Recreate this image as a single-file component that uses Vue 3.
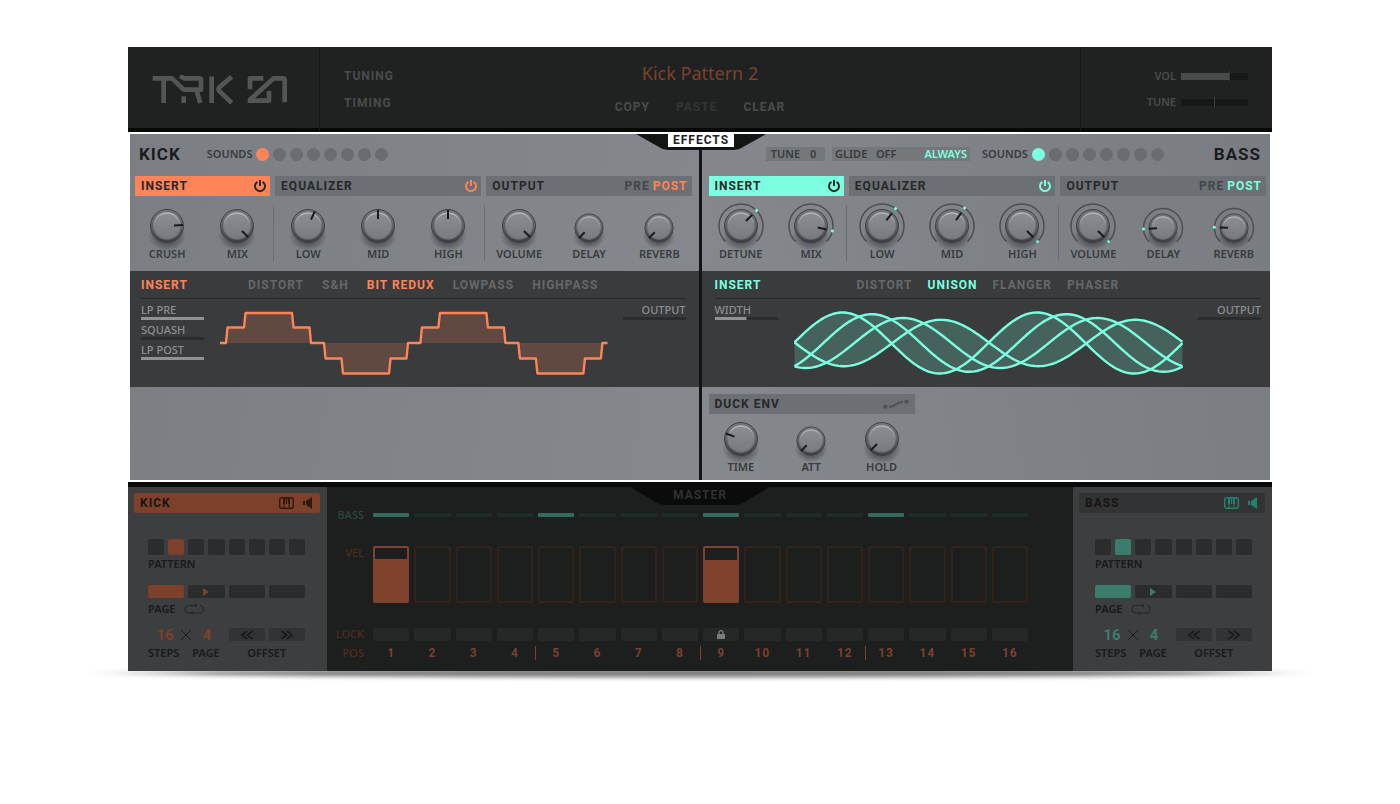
<template>
  <main class="page">
    <svg class="defs" width="0" height="0" aria-hidden="true">
      <defs>
        <linearGradient id="knobRim" x1="0" y1="0" x2="0" y2="1">
          <stop offset="0" stop-color="#74787c" />
          <stop offset="0.5" stop-color="#5e6165" />
          <stop offset="1" stop-color="#3c3e41" />
        </linearGradient>
        <linearGradient id="knobFace" x1="0" y1="0" x2="0" y2="1">
          <stop offset="0" stop-color="#8a8e92" />
          <stop offset="1" stop-color="#777b80" />
        </linearGradient>
        <linearGradient id="knobEdge" x1="0" y1="0" x2="0" y2="1">
          <stop offset="0" stop-color="#b4b8bb" />
          <stop offset="0.5" stop-color="#7e8286" />
          <stop offset="1" stop-color="#6c6f73" />
        </linearGradient>
        <radialGradient id="knobShadow">
          <stop offset="0.5" stop-color="#000" stop-opacity="0.34" />
          <stop offset="1" stop-color="#000" stop-opacity="0" />
        </radialGradient>
      </defs>
    </svg>

    <div class="plugin">
      <header class="top">
        <div class="brand">
          <svg class="logo" viewBox="96 104 408 87" width="136" height="29" role="img" aria-label="TRK 01">
            <g fill="none" stroke="#545555" stroke-width="14" stroke-linejoin="round">
              <path d="M98 114H156L191 148H243V119Q243 114 238 114H192L180 107" />
              <path d="M131 114V188" />
              <path d="M191 168V188" />
              <path d="M229 148L241 188" />
              <path d="M275 108V188" />
              <path d="M335 109L296 143V150L335 188" />
              <path d="M390 147V114H430" />
              <path d="M390 188V178L461 114H489Q494 114 494 120V186" />
              <path d="M386 181H447V152" />
            </g>
          </svg>
        </div>
        <nav class="modes">
          <button type="button">TUNING</button>
          <button type="button">TIMING</button>
        </nav>
        <div class="pattern">
          <h1>Kick Pattern 2</h1>
          <div class="edit">
            <button type="button">COPY</button>
            <button type="button" disabled>PASTE</button>
            <button type="button">CLEAR</button>
          </div>
        </div>
        <div class="main-levels">
          <label>VOL <input v-model="volume" type="range" class="level" :style="{ '--fill': volume + '%' }" /></label>
          <label>TUNE <input v-model="tune" type="range" class="level centered" /></label>
        </div>
      </header>

      <section class="effects">
        <div class="badge-effects"><span>EFFECTS</span></div>
        <article v-for="voice in voices" :key="voice.id" class="voice" :class="voice.id">
          <div class="voice-head">
            <h2>{{ voice.name }}</h2>
            <div v-if="voice.id === 'bass'" class="pitch">
              <label class="field tune">TUNE <input v-model="bassTune" type="text" /></label>
              <div class="field glide">
                <button type="button">GLIDE&nbsp;&nbsp; OFF</button>
                <button type="button" class="on">ALWAYS</button>
              </div>
            </div>
            <fieldset class="sounds">
              <legend>SOUNDS</legend>
              <input
                v-for="n in 8"
                :key="n"
                v-model="voice.sound"
                type="radio"
                :value="n"
                :name="voice.id + '-sound'"
                :aria-label="'Sound ' + n"
              />
            </fieldset>
          </div>

          <div class="tabs">
            <div class="tab lit">
              <span>INSERT</span>
              <button type="button" aria-label="Insert power">
                <svg viewBox="0 0 12 12" width="12" height="12"><path class="power" d="M3.4 1.9A5 5 0 1 0 8.6 1.9M6 0V6" /></svg>
              </button>
            </div>
            <div class="tab">
              <span>EQUALIZER</span>
              <button type="button" class="on" aria-label="Equalizer power">
                <svg viewBox="0 0 12 12" width="12" height="12"><path class="power" d="M3.4 1.9A5 5 0 1 0 8.6 1.9M6 0V6" /></svg>
              </button>
            </div>
            <div class="tab">
              <span>OUTPUT</span>
              <span class="prepost">
                <button type="button">PRE</button>
                <button type="button" class="on">POST</button>
              </span>
            </div>
          </div>

          <div class="knobs">
            <label v-for="knob in voice.knobs" :key="knob.label" class="knob" :class="{ split: knob.split }">
              <svg viewBox="0 0 48 48" width="48" height="48">
                <g :transform="knob.small ? 'translate(24 26)' : 'translate(24 24)'">
                  <path v-if="knob.ring" class="ring" :d="ringPath(knob)" />
                  <circle
                    v-if="knob.ring"
                    class="dot"
                    r="1.5"
                    :cy="-ringRadius(knob)"
                    :transform="'rotate(' + knob.angle + ')'"
                  />
                  <g :transform="knob.small ? 'scale(0.86)' : ''">
                    <ellipse cy="10" rx="19" ry="15" fill="url(#knobShadow)" />
                    <circle r="16.5" fill="url(#knobRim)" stroke="#3f4245" />
                    <circle r="13" fill="url(#knobFace)" stroke="url(#knobEdge)" stroke-width="1.5" />
                  </g>
                  <path class="hand" :d="knob.small ? 'M0 -6V-14' : 'M0 -7V-16'" :transform="'rotate(' + knob.angle + ')'" />
                </g>
              </svg>
              <span>{{ knob.label }}</span>
              <input v-model="knob.angle" type="range" min="-135" max="135" />
            </label>
          </div>

          <div class="insert">
            <div class="insert-head">
              <h3>INSERT</h3>
              <div class="types">
                <button
                  v-for="type in voice.types"
                  :key="type"
                  type="button"
                  :class="{ on: type === voice.type }"
                  @click="voice.type = type"
                >{{ type }}</button>
              </div>
            </div>
            <div class="insert-body">
              <div class="params">
                <label v-for="param in voice.params" :key="param.label">
                  {{ param.label }}
                  <input v-model="param.value" type="range" class="bar" :style="{ '--fill': param.value + '%' }" />
                </label>
              </div>
              <svg class="wave" viewBox="0 0 390 67" width="390" height="67">
                <template v-if="voice.id === 'kick'">
                  <path class="area" :d="stepWave + 'Z'" />
                  <path class="curve" :d="stepWave" />
                </template>
                <template v-else>
                  <path class="area" :d="envelope" />
                  <path v-for="(line, i) in sineWaves" :key="i" class="curve" :d="line" />
                </template>
              </svg>
              <div class="params out">
                <label>
                  OUTPUT
                  <input type="range" class="bar" value="0" :style="{ '--fill': '0%' }" />
                </label>
              </div>
            </div>
          </div>

          <div class="lower">
            <template v-if="voice.duck">
              <div class="tabs">
                <div class="tab duck">
                  <span>DUCK ENV</span>
                  <svg viewBox="0 0 26 10" width="26" height="10">
                    <circle cx="2.2" cy="7.6" r="2.2" />
                    <circle cx="23.6" cy="2.6" r="2.2" />
                    <path d="M6 8C12 8 13 3 20 3" />
                  </svg>
                </div>
              </div>
              <div class="knobs">
                <label v-for="knob in voice.duck" :key="knob.label" class="knob">
                  <svg viewBox="0 0 48 48" width="48" height="48">
                    <g :transform="knob.small ? 'translate(24 26)' : 'translate(24 24)'">
                      <g :transform="knob.small ? 'scale(0.86)' : ''">
                        <ellipse cy="10" rx="19" ry="15" fill="url(#knobShadow)" />
                        <circle r="16.5" fill="url(#knobRim)" stroke="#3f4245" />
                        <circle r="13" fill="url(#knobFace)" stroke="url(#knobEdge)" stroke-width="1.5" />
                      </g>
                      <path class="hand" :d="knob.small ? 'M0 -6V-14' : 'M0 -7V-16'" :transform="'rotate(' + knob.angle + ')'" />
                    </g>
                  </svg>
                  <span>{{ knob.label }}</span>
                  <input v-model="knob.angle" type="range" min="-135" max="135" />
                </label>
              </div>
            </template>
          </div>
        </article>
      </section>

      <section class="bottom">
        <aside v-for="voice in voices" :key="voice.id" class="side" :class="voice.id">
          <div class="side-title">
            <h2>{{ voice.name }}</h2>
            <button type="button" aria-label="Keyboard">
              <svg viewBox="0 0 15 12" width="15" height="12">
                <rect class="line" x="0.7" y="0.7" width="13.6" height="10.6" rx="2" />
                <path class="line thin" d="M5 6V11M10 6V11" />
                <path d="M4 1H6V7H4ZM6.8 1H8.2V7H6.8ZM9 1H11V7H9Z" />
              </svg>
            </button>
            <button type="button" aria-label="Mute">
              <svg viewBox="0 0 10 12" width="10" height="12"><path d="M0 4H2V8H0ZM3 4L9 0V12L3 8Z" /></svg>
            </button>
          </div>
          <div class="side-body">
            <div class="cells patterns">
              <button v-for="n in 8" :key="n" type="button" :class="{ on: n === 2 }" :aria-label="'Pattern ' + n"></button>
            </div>
            <p class="caption">PATTERN</p>
            <div class="cells pages">
              <button v-for="n in 4" :key="n" type="button" :class="{ on: n === 1 }" :aria-label="'Page ' + n">
                <svg v-if="n === 2" viewBox="0 0 6 8" width="6" height="8"><path d="M0 0L6 4L0 8Z" /></svg>
              </button>
            </div>
            <p class="caption page-caption">
              PAGE
              <svg viewBox="0 0 20 10" width="20" height="10">
                <path d="M9 9H4.5A3.5 3.7 0 0 1 4.5 1.5H13M11 0L13 1.5L11 3M16 1.5A3.5 3.7 0 0 1 15.5 9H7M9 7.5L7 9L9 10.5" />
              </svg>
            </p>
            <div class="cells offset">
              <div class="counts">
                <input v-model="steps" type="text" :aria-label="voice.name + ' steps'" />
                <svg viewBox="0 0 12 12" width="12" height="12"><path d="M1 1L11 11M11 1L1 11" /></svg>
                <input v-model="pages" type="text" :aria-label="voice.name + ' pages'" />
              </div>
              <button type="button" aria-label="Offset back">
                <svg viewBox="0 0 12 10" width="12" height="10"><path d="M6 1L1 5L6 9M11.5 1L6.5 5L11.5 9" /></svg>
              </button>
              <button type="button" aria-label="Offset forward">
                <svg viewBox="0 0 12 10" width="12" height="10"><path d="M0.5 1L5.5 5L0.5 9M6 1L11 5L6 9" /></svg>
              </button>
            </div>
            <div class="cells captions">
              <span>STEPS</span><span class="mid">PAGE</span><span class="wide">OFFSET</span>
            </div>
          </div>
        </aside>

        <div class="seq">
          <div class="badge-master">MASTER</div>
          <div class="row other">
            <span class="name">BASS</span>
            <i v-for="n in 16" :key="n" :class="{ on: n % 4 === 1 }"></i>
          </div>
          <div class="row velocity">
            <span class="name">VEL</span>
            <label v-for="(v, i) in velocities" :key="i" :class="{ on: v > 0 }">
              <b :style="{ height: v + '%' }"></b>
              <input v-model="velocities[i]" type="range" :aria-label="'Velocity ' + (i + 1)" />
            </label>
          </div>
          <div class="row locks">
            <span class="name">LOCK</span>
            <button v-for="n in 16" :key="n" type="button" :aria-label="'Lock ' + n">
              <svg v-if="n === 9" viewBox="0 0 8 9" width="8" height="9">
                <path d="M0 4H8V9H0Z" />
                <path class="shackle" d="M2 4V2.6A2 2 0 0 1 6 2.6V4" />
              </svg>
            </button>
          </div>
          <div class="row positions">
            <span class="name">POS</span>
            <span v-for="n in 16" :key="n" class="pos" :class="{ beat: n > 1 && n % 4 === 1 }">{{ n }}</span>
          </div>
        </div>
      </section>
    </div>
  </main>
</template>

<script setup>
import { ref, reactive } from 'vue'

const volume = ref(73)
const tune = ref(50)
const bassTune = ref('0')
const steps = ref('16')
const pages = ref('4')
const velocities = ref([79, 0, 0, 0, 0, 0, 0, 0, 77, 0, 0, 0, 0, 0, 0, 0])

const voices = reactive([
  {
    id: 'kick',
    name: 'KICK',
    sound: 1,
    type: 'BIT REDUX',
    types: ['DISTORT', 'S&H', 'BIT REDUX', 'LOWPASS', 'HIGHPASS'],
    params: [
      { label: 'LP PRE', value: 100 },
      { label: 'SQUASH', value: 0 },
      { label: 'LP POST', value: 100 },
    ],
    knobs: [
      { label: 'CRUSH', angle: 86 },
      { label: 'MIX', angle: 135 },
      { label: 'LOW', angle: 25, split: true },
      { label: 'MID', angle: 0 },
      { label: 'HIGH', angle: 0 },
      { label: 'VOLUME', angle: 135, split: true },
      { label: 'DELAY', angle: -135, small: true },
      { label: 'REVERB', angle: -135, small: true },
    ],
  },
  {
    id: 'bass',
    name: 'BASS',
    sound: 1,
    type: 'UNISON',
    types: ['DISTORT', 'UNISON', 'FLANGER', 'PHASER'],
    params: [{ label: 'WIDTH', value: 50 }],
    knobs: [
      { label: 'DETUNE', angle: 45, ring: true },
      { label: 'MIX', angle: 103, ring: true },
      { label: 'LOW', angle: 38, ring: true, split: true },
      { label: 'MID', angle: 35, ring: true },
      { label: 'HIGH', angle: 135, ring: true },
      { label: 'VOLUME', angle: 135, ring: true, split: true },
      { label: 'DELAY', angle: -93, ring: true, small: true },
      { label: 'REVERB', angle: -88, ring: true, small: true },
    ],
    duck: [
      { label: 'TIME', angle: -70 },
      { label: 'ATT', angle: -135, small: true },
      { label: 'HOLD', angle: -135 },
    ],
  },
])

function ringRadius(knob) {
  return knob.small ? 19.5 : 22
}

function ringPath(knob) {
  const r = ringRadius(knob)
  const e = r * Math.SQRT1_2
  return `M${-e} ${e}A${r} ${r} 0 1 1 ${e} ${e}`
}

// one period of the bit-crushed sine, drawn twice
const crushed = [
  [8, 33], [9.5, 17.5], [26, 17.5], [27.5, 3], [74, 3], [75.5, 17.5],
  [91.5, 17.5], [93, 33], [106, 33], [107.5, 48.5], [123.5, 48.5], [125, 63.5],
  [171, 63.5], [172.5, 48.5], [188.5, 48.5], [190, 33],
]
const period = 194.4
const stepWave =
  'M2 33' +
  [0, period].map((dx) => crushed.map(([x, y]) => `L${x + dx} ${y}`).join('')).join('') +
  'L389.5 33'

const sines = [
  { peak: 49.5, amp: 30.5 },
  { peak: 79, amp: 28.8 },
  { peak: 110, amp: 25 },
  { peak: 148, amp: 23.2 },
]
const xs = Array.from({ length: 195 }, (_, i) => 1.5 + i * 2)

function sineY(s, x) {
  return 33 - s.amp * Math.cos((2 * Math.PI * (x - s.peak)) / period)
}

function toPath(points) {
  return 'M' + points.map(([x, y]) => `${x.toFixed(1)} ${y.toFixed(2)}`).join('L')
}

const sineWaves = sines.map((s) => toPath(xs.map((x) => [x, sineY(s, x)])))
const upper = xs.map((x) => [x, Math.min(...sines.map((s) => sineY(s, x)))])
const lowerEdge = xs.map((x) => [x, Math.max(...sines.map((s) => sineY(s, x)))])
const envelope = toPath([...upper, ...lowerEdge.reverse()]) + 'Z'
</script>

<style>
body {
  margin: 0;
  background: #fff;
}
</style>

<style scoped>
.page {
  padding: 47px 128px;
  font-family: 'Noto Sans', 'Open Sans', sans-serif;
  font-size: 11px;
  line-height: 14px;
}

.defs {
  position: absolute;
}

h1, h2, h3, p, fieldset {
  margin: 0;
  padding: 0;
  border: 0;
}

button {
  padding: 0;
  border: 0;
  background: none;
  color: inherit;
  font: inherit;
  letter-spacing: inherit;
  cursor: pointer;
}

input {
  margin: 0;
}

svg {
  display: block;
}

.plugin {
  position: relative;
  min-width: 1100px;
}

.plugin::after {
  content: '';
  position: absolute;
  z-index: -1;
  left: -44px;
  right: -44px;
  bottom: -7px;
  height: 10px;
  background: radial-gradient(closest-side, #000 80%, transparent);
  filter: blur(2px);
  opacity: 0.5;
}

/* header */
.top {
  display: grid;
  grid-template-columns: 192px 1fr auto 1fr 192px;
  height: 81px;
  border-bottom: 4px solid #080808;
  background: #202222;
  color: #4a4b4b;
  font-family: Roboto, 'Open Sans', sans-serif;
  font-size: 12px;
  font-weight: 700;
  letter-spacing: 1px;
}

.brand {
  padding: 28px 0 0 24px;
  border-right: 1px solid #151616;
}

.modes {
  display: flex;
  flex-direction: column;
  align-items: flex-start;
  gap: 13px;
  padding: 22px 24px;
}

.pattern {
  display: flex;
  flex-direction: column;
  align-items: center;
  gap: 15px;
  padding-top: 14px;
}

.pattern h1 {
  color: #7b412d;
  font-family: 'Noto Sans', 'Open Sans', sans-serif;
  font-size: 18px;
  font-weight: 400;
  line-height: 24px;
  letter-spacing: normal;
}

.edit {
  display: flex;
  gap: 26px;
}

.edit button:disabled {
  color: #333434;
}

.main-levels {
  grid-column: 5;
  display: flex;
  flex-direction: column;
  align-items: flex-end;
  gap: 12px;
  padding: 22px 24px 0 0;
  border-left: 1px solid #151616;
  font-family: 'Noto Sans', 'Open Sans', sans-serif;
  font-size: 11px;
  font-weight: 600;
  letter-spacing: normal;
}

.main-levels label {
  display: flex;
  align-items: center;
  gap: 5px;
}

input[type='range'] {
  appearance: none;
}

.level,
.bar {
  display: block;
  width: 67px;
  height: 7px;
  background: linear-gradient(#494a4a, #494a4a) left / var(--fill) 100% no-repeat #161717;
}

.level::-webkit-slider-thumb {
  appearance: none;
  width: 1px;
  height: 10px;
  background: #3c3d3d;
}

.level.centered {
  background: #161717;
}

/* effects */
.effects {
  position: relative;
  display: grid;
  grid-template-columns: 1fr 1fr;
  gap: 3px;
  border: 2px solid #fff;
  background: #131414;
}

.badge-effects {
  position: absolute;
  z-index: 1;
  top: -2px;
  left: 50%;
  display: flex;
  justify-content: center;
  width: 130px;
  height: 18px;
  margin-left: -64px;
  background: #131414;
  clip-path: polygon(0 0, 100% 0, 100% 2px, 82% 85%, 79% 96%, 75% 100%, 25% 100%, 21% 96%, 18% 85%, 0 2px);
  font-family: Roboto, 'Open Sans', sans-serif;
  font-size: 12px;
  font-weight: 700;
  letter-spacing: 1px;
}

.badge-effects::before {
  content: '';
  position: absolute;
  top: 0;
  left: 0;
  right: 0;
  height: 2px;
  background: #fff;
}

.badge-effects span {
  position: relative;
  height: 15px;
  padding: 0 5px;
  background: #fff;
  color: #222;
  line-height: 16px;
}

.voice {
  --accent: #ff8457;
  --dim: #7d402b;
  color: #383b3e;
  background: linear-gradient(100deg, #7b7f83, #85898d);
  font-weight: 600;
}

.voice.bass {
  --accent: #7bffe0;
  background: linear-gradient(260deg, #797c80, #85898d);
}

.voice-head {
  display: flex;
  align-items: center;
  gap: 26px;
  height: 42px;
  padding: 0 9px 2px;
  box-sizing: border-box;
}

.voice-head h2 {
  color: #1b1c1d;
  font-family: Roboto, 'Open Sans', sans-serif;
  font-size: 17px;
  font-weight: 700;
  letter-spacing: 1px;
}

.bass .voice-head {
  gap: 12px;
  justify-content: flex-end;
}

.bass .voice-head h2 {
  order: 3;
  margin-left: 38px;
}

.sounds {
  display: flex;
  align-items: center;
  gap: 4px;
}

.sounds legend {
  float: left;
  padding: 0;
}

.sounds input {
  appearance: none;
  width: 13px;
  height: 13px;
  border-radius: 50%;
  background: #696c70;
}

.sounds input:checked {
  background: var(--accent);
}

.pitch {
  display: flex;
  gap: 7px;
}

.field {
  display: flex;
  gap: 10px;
  padding: 0 5px;
  background: #75787b;
}

.field input {
  width: 10px;
  padding: 0;
  border: 0;
  background: none;
  color: inherit;
  font: inherit;
}

.glide {
  gap: 28px;
  padding: 0 3px;
}

.on {
  color: var(--accent);
}

.tabs {
  display: grid;
  grid-template-columns: 135fr 206fr 205fr;
  gap: 5px;
  padding: 0 7px 0 5px;
}

.bass .tabs {
  padding: 0 4px 0 7px;
}

.tab {
  display: flex;
  align-items: center;
  justify-content: space-between;
  height: 20px;
  padding: 0 4px 0 6px;
  border-radius: 1px;
  background: #6c6f73;
  color: #26282a;
  font-family: Roboto, 'Open Sans', sans-serif;
  font-size: 12px;
  font-weight: 700;
  letter-spacing: 1px;
}

.tab.lit {
  background: var(--accent);
}

.power {
  fill: none;
  stroke: currentColor;
  stroke-width: 2;
}

.tab svg {
  overflow: visible;
}

.prepost {
  display: flex;
  gap: 3px;
  color: #434649;
}

.prepost .on {
  color: var(--accent);
}

.knobs {
  display: grid;
  grid-template-columns: repeat(8, 1fr);
  padding: 9px 4px 10px 2px;
}

.bass .knobs {
  padding: 9px 1px 10px 4px;
}

.knob {
  position: relative;
  display: flex;
  flex-direction: column;
  align-items: center;
}

.knob.split {
  border-left: 1px solid #6a6d71;
}

.knob svg {
  margin: -3px 0;
  overflow: visible;
}

.knob span {
  margin-bottom: 0;
}

.knob input {
  position: absolute;
  inset: 4px 18px 18px;
  width: 34px;
  opacity: 0;
  cursor: pointer;
}

.ring {
  fill: none;
  stroke: #4c4f52;
  stroke-width: 1.5;
}

.dot {
  fill: var(--accent);
}

.hand {
  stroke: #191a1b;
  stroke-width: 2;
}

/* insert display */
.insert {
  box-sizing: border-box;
  height: 116px;
  padding: 0 13px 0 11px;
  background: #393b3d;
  color: #8d8f91;
}

.bass .insert {
  padding: 0 9px 0 13px;
}

.insert-head {
  display: flex;
  align-items: center;
  height: 27px;
  border-bottom: 1px solid #28292a;
  font-family: Roboto, 'Open Sans', sans-serif;
  font-size: 12px;
  font-weight: 700;
  letter-spacing: 1px;
}

.insert-head h3 {
  flex: 0 0 107px;
  color: var(--accent);
  font: inherit;
}

.bass .insert-head h3 {
  flex-basis: 142px;
}

.types {
  display: flex;
  gap: 18px;
  color: #66686a;
}

.bass .types {
  gap: 15px;
}

.types .on {
  color: var(--accent);
}

.insert-body {
  display: grid;
  grid-template-columns: 63px 1fr 63px;
  justify-items: center;
  padding-top: 4px;
  font-weight: 500;
}

.params {
  display: flex;
  flex-direction: column;
  gap: 3px;
  width: 100%;
}

.params label {
  display: block;
}

.params.out {
  text-align: right;
}

.bar {
  width: 100%;
  height: 3px;
  background-color: #2b2c2d;
  background-image: linear-gradient(#8f9192, #8f9192);
}

.bar::-webkit-slider-thumb {
  appearance: none;
  width: 0;
  height: 3px;
}

.wave {
  margin-top: 7px;
}

.area {
  fill: var(--accent);
  fill-opacity: 0.2;
}

.curve {
  fill: none;
  stroke: var(--accent);
  stroke-width: 2.4;
  stroke-linejoin: round;
}

.lower {
  box-sizing: border-box;
  height: 93px;
  padding-top: 7px;
}

.lower .tabs {
  grid-template-columns: 206fr 346fr;
}

.bass .lower .knobs {
  padding-top: 4px;
}

.duck svg {
  fill: #4f5255;
  margin-right: 2px;
}

.duck path {
  fill: none;
  stroke: #4f5255;
  stroke-width: 2;
}

/* sequencer */
.bottom {
  display: grid;
  grid-template-columns: 199px 1fr 199px;
  border-top: 5px solid #0a0a0a;
  background: #1d1e1e;
}

.side {
  --dim: #7d402b;
  --icon: #30190f;
  padding: 6px 7px 11px 6px;
  background: #3c3e40;
  color: #191a1b;
  font-weight: 600;
}

.side.bass {
  --dim: #3c7c6d;
  --icon: #23826f;
  grid-column: 3;
}

.side-title {
  display: flex;
  align-items: center;
  gap: 9px;
  height: 20px;
  padding: 0 7px 0 6px;
  border-radius: 2px;
  background: #313335;
  color: var(--icon);
}

.kick .side-title {
  background: var(--dim);
}

.side-title h2 {
  flex: 1;
  color: #191312;
  font-family: Roboto, 'Open Sans', sans-serif;
  font-size: 12px;
  font-weight: 700;
  letter-spacing: 1px;
}

.side-title svg {
  fill: currentColor;
}

.side-title .line {
  fill: none;
  stroke: currentColor;
  stroke-width: 1.4;
}

.side-title .thin {
  stroke-width: 1;
}

.side-body {
  padding: 26px 15px 0 14px;
}

.bass .side-body {
  padding: 26px 13px 0 16px;
}

.cells {
  display: grid;
  grid-template-columns: repeat(4, 1fr);
  gap: 4px;
}

.cells button {
  display: flex;
  align-items: center;
  justify-content: center;
  height: 13px;
  border-radius: 2px;
  background: #2b2c2e;
}

.cells .on {
  background: var(--dim);
}

.cells.patterns {
  grid-template-columns: repeat(8, 1fr);
}

.cells.patterns button {
  height: 16px;
}

.pages svg {
  fill: var(--dim);
}

.caption {
  padding: 2px 0 14px;
}

.page-caption {
  display: flex;
  align-items: center;
  gap: 8px;
  padding: 4px 0 12px;
}

.page-caption svg {
  fill: none;
  stroke: #232426;
  overflow: visible;
}

.counts {
  grid-column: span 2;
  display: flex;
  align-items: center;
  gap: 5px;
  height: 13px;
  padding-left: 7px;
}

.counts input {
  width: 20px;
  padding: 0;
  border: 0;
  background: none;
  color: var(--dim);
  font: 700 15px/16px Roboto, 'Open Sans', sans-serif;
  text-align: center;
}

.counts svg {
  fill: none;
  stroke: #1b1c1d;
}

.cells.offset button {
  background: #313335;
}

.offset button svg {
  fill: none;
  stroke: #161718;
  stroke-width: 1.6;
}

.captions {
  padding-top: 5px;
}

.captions .mid {
  padding-left: 4px;
}

.captions .wide {
  grid-column: span 2;
  text-align: center;
}

.seq {
  position: relative;
  grid-column: 2;
  grid-row: 1;
  padding: 20px 45px 0 0;
}

.badge-master {
  position: absolute;
  top: -1px;
  left: 50%;
  width: 146px;
  height: 19px;
  margin-left: -73px;
  background: #0b0b0b;
  clip-path: polygon(0 0, 100% 0, 97% 8%, 81% 82%, 78% 94%, 74% 100%, 26% 100%, 22% 94%, 19% 82%, 3% 8%);
  color: #303131;
  font-family: Roboto, 'Open Sans', sans-serif;
  font-size: 12px;
  font-weight: 700;
  letter-spacing: 1px;
  line-height: 18px;
  text-align: center;
}

.row {
  display: grid;
  grid-template-columns: 41px repeat(16, 1fr);
  gap: 5px;
  align-items: center;
  color: #7b412d;
}

.name {
  padding-right: 4px;
  color: #4f2c21;
  font-weight: 500;
  text-align: right;
}

.other {
  height: 16px;
}

.other .name {
  color: #27493f;
}

.other i {
  height: 4px;
  border-radius: 1px;
  background: #1e2b28;
}

.other .on {
  background: #356a5f;
}

.velocity {
  align-items: start;
  margin-top: 23px;
}

.velocity label {
  position: relative;
  display: flex;
  align-items: flex-end;
  box-sizing: border-box;
  height: 57px;
  border: 2px solid #33211c;
  border-radius: 2px;
}

.velocity label.on {
  border-color: #80422d;
}

.velocity b {
  flex: 1;
  background: #80422d;
}

.velocity input {
  position: absolute;
  inset: 0;
  width: 100%;
  opacity: 0;
  writing-mode: vertical-lr;
  direction: rtl;
}

.locks {
  margin-top: 24px;
  height: 13px;
}

.locks button {
  display: flex;
  align-items: center;
  justify-content: center;
  height: 13px;
  border-radius: 2px;
  background: #262727;
}

.locks svg {
  fill: #7a7b7b;
}

.shackle {
  fill: none;
  stroke: #7a7b7b;
  stroke-width: 1.3;
}

.positions {
  margin-top: 6px;
}

.pos {
  position: relative;
  font-family: Roboto, 'Open Sans', sans-serif;
  font-size: 12px;
  font-weight: 700;
  letter-spacing: 1px;
  text-align: center;
}

.beat::before {
  content: '';
  position: absolute;
  left: -3px;
  top: 0;
  width: 1px;
  height: 14px;
  background: #7b412d;
}
</style>
